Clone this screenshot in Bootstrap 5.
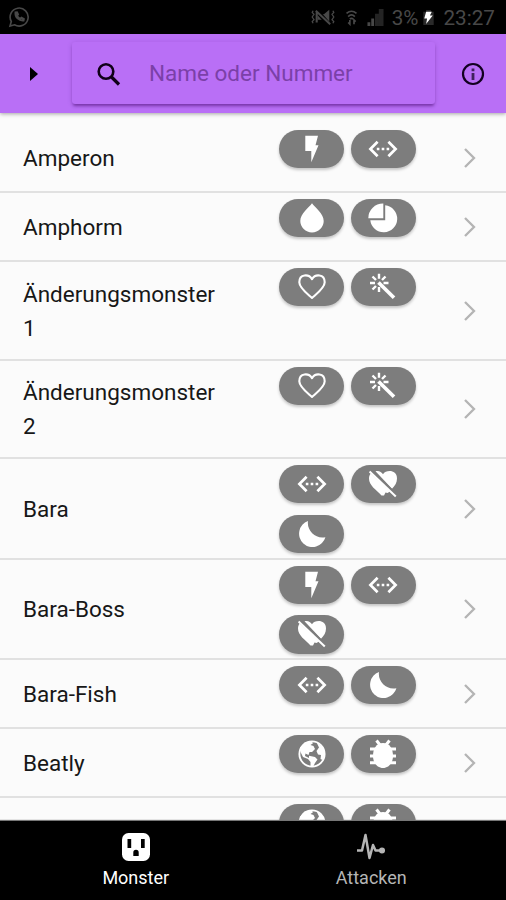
<!DOCTYPE html>
<html lang="de">
<head>
<meta charset="utf-8">
<meta name="viewport" content="width=device-width, initial-scale=1">
<title>Monster</title>
<link href="https://cdn.jsdelivr.net/npm/bootstrap@5.3.0/dist/css/bootstrap.min.css" rel="stylesheet">
<style>
body{font-family:Roboto,"Liberation Sans",sans-serif;height:900px;overflow:hidden;background:#fbfbfb;color:#171717}
.status{height:34px;background:#000;color:#484848;font-size:20.7px;line-height:36px;padding-left:8px;padding-right:11px}
.status span{padding-top:2px}
.topbar{height:79px;background:#b96ff6;padding-left:30px;padding-right:21px;box-shadow:0 1px 4px rgba(0,0,0,.35);z-index:2}
.search{width:363px;height:62px;margin-left:34px;margin-top:-1px;padding-left:24px;font-size:22.5px;color:#7b40a8;border-radius:3px;box-shadow:0 3px 3px -1px rgba(60,0,100,.45),0 1px 5px rgba(60,0,100,.18)}
.search span{margin-left:28px;padding-top:1px}
.search svg{margin-top:2px}
.monsters{padding-top:11px;min-height:0}
.monster{height:69px;border-bottom:2px solid #e1e1e1;padding-left:23px;font-size:22.5px;line-height:34px;flex:none}
.tall{height:98.5px}
.stacked{height:100.5px}
.title{width:200px;margin-right:56px;padding-top:1px}
.types{width:150px;align-self:flex-start;padding-top:6px;column-gap:6.5px;row-gap:11.5px}
.type{width:65.3px;height:38.3px;border-radius:20px;background:#7d7d7d;color:#fff;box-shadow:0 2px 3px rgba(0,0,0,.22)}
.type svg{width:30px;height:30px}
.go{width:14px;height:22px;margin-left:34px;margin-top:1px;color:#b4b4b4}
.tabs{height:79px;background:#000;color:#b5b5b5;font-size:18px;line-height:24px;z-index:2;box-shadow:0 -1px 1px #777;padding:0 17px 0 18px}
.tabs a{padding-top:11px;color:#b5b5b5}
.tabs a.active{color:#fff}
</style>
<script src="https://cdn.jsdelivr.net/npm/bootstrap@5.3.0/dist/js/bootstrap.bundle.min.js"></script>
</head>
<body class="d-flex flex-column">
<svg class="d-none">
<symbol id="bolt" viewBox="0 0 30 30"><path fill="currentColor" d="M8.300 1.700H21L18.500 11.300H21.500L14.300 28.300V17H8.300Z"/></symbol>
<symbol id="link" viewBox="0 0 30 30"><path fill="none" stroke="currentColor" stroke-width="2.700" d="M9.600 7.800 2.400 15l7.200 7.200M20.400 7.800l7.200 7.200-7.200 7.200"/><path fill="currentColor" d="M8.800 13.700h2.600v2.600H8.800zM13.700 13.700h2.600v2.600h-2.600zM18.600 13.700h2.600v2.600h-2.600z"/></symbol>
<symbol id="drop" viewBox="0 0 30 30"><path fill="currentColor" d="M15 .3C12 4.800 3.300 10.500 3.300 18a11.700 11.400 0 0 0 23.400 0C26.700 10.500 18 4.800 15 .3Z"/></symbol>
<symbol id="pie" viewBox="0 0 30 30"><path fill="currentColor" d="M17.200 2.300A13.500 13.500 0 1 1 2.300 17.200H17.200Z"/><path fill="currentColor" d="M15.300.6V15.300H.3A14.700 14.700 0 0 1 15.300.6Z"/></symbol>
<symbol id="heart" viewBox="0 0 30 30"><path fill="none" stroke="currentColor" stroke-width="2.100" stroke-linejoin="round" d="M15 26C10 21.500 2.300 16 2.300 10.300 2.300 1.500 12 1.800 15 7.200 18 1.800 27.700 1.500 27.700 10.300 27.700 16 20 21.500 15 26Z"/></symbol>
<symbol id="wand" viewBox="0 0 30 30"><path fill="none" stroke="currentColor" stroke-width="3.700" d="M10.500 10.500 26 25.800"/><path fill="none" stroke="currentColor" stroke-width="2.400" d="M11 1.800v5M11 15v5M2 11h5M15.500 11h5M4.500 4.500l3.500 3.500M17.500 4.500 14 8M4.500 17.500 8 14"/></symbol>
<symbol id="noheart" viewBox="0 0 30 30"><path fill="currentColor" d="M7.500 2.300C11 1.500 13.500 3 15 5.300 18 .5 29 .5 29 9.500 29 13.800 26.800 17 24 19.700Z"/><path fill="currentColor" d="M2.800 4.500 22 22.500 19.500 24 17.500 23.500 16 26.500 13.500 26.500C8 20.500 1 16.500 1 9.500 1 7.500 1.600 5.800 2.800 4.500Z"/><path stroke="#7d7d7d" stroke-width="1.500" d="M4 1.800 27 23.700"/><path stroke="currentColor" stroke-width="2" d="M1.600 2.600 27.800 27.400"/></symbol>
<symbol id="moon" viewBox="0 0 30 30"><path fill="currentColor" d="M11 2A13.400 13.400 0 1 0 28.400 18.200C19 20.500 9.500 12 11 2Z"/></symbol>
<symbol id="globe" viewBox="0 0 30 30"><circle cx="15" cy="15" r="12.600" fill="none" stroke="currentColor" stroke-width="1.900"/><path fill="currentColor" d="M3 9 7.500 3.500 14.500 2 16 4.200 13.500 6 16.500 7 18 10 15 13 12.500 13 11.500 16 8.500 14.500 8 17 12 19 12 16.800 18 18 20.500 20.500 18 24 16 28 13.500 27.500 13.500 23 11 20 6 18 3.500 13Z"/><path fill="currentColor" d="M19.500 3.300 26 8.500 28 15 25.500 21 23.500 20 24 16 21 15.500 19.500 12 22 8.500Z"/></symbol>
<symbol id="bug" viewBox="0 0 30 30"><path fill="currentColor" d="M15 4C22 4 25 10 25 17S20.500 29 15 29 5 24 5 17 8 4 15 4Z"/><path fill="none" stroke="currentColor" stroke-width="3" d="M8.500 1.500 12 6M21.500 1.500 18 6M2 10h26M2 17h26M2 23.800h26"/></symbol>
<symbol id="next" viewBox="0 0 14 22"><path fill="none" stroke="currentColor" stroke-width="2.300" d="M2 2l9 9-9 9"/></symbol>
</svg>
<header class="status d-flex align-items-center flex-shrink-0">
<svg class="me-auto" width="22" height="22" viewBox="0 0 22 22" fill="none" stroke="currentColor" stroke-width="1.600"><path d="M2 20 3.300 15.500A9 9 0 1 1 6.500 18.800Z"/><path stroke-width="2" d="M7.500 6.500C7 11 11 15 15.500 14.500l.3-1.500-2.300-1.200-1.300 1C10.500 12 9.500 11 9 9.500l1-1.200-1-2Z"/></svg>
<svg width="26" height="18" viewBox="0 0 26 20" fill="none" stroke="currentColor"><path stroke-width="1.400" d="M2 3 1 5l2 2-2 3 2 3-2 2 1 2M24 3l1 2-2 2 2 3-2 3 2 2-1 2"/><path fill="currentColor" stroke="none" d="M20 2v16l-6-5H7V7h7Z"/><path stroke="#000" stroke-width="5" d="M5 2 20 19"/><path stroke-width="2.300" d="M5 3 21 18M6 4v12"/></svg>
<svg class="ms-2 me-2" width="15" height="17" viewBox="0 0 18 20" fill="none" stroke="currentColor" stroke-width="2"><path d="M3 5Q9 0 15 5M5 9q4-4 8 0M7 12q2-2 4 0M7 13v5l-2-2M12 18v-5l2 2"/></svg>
<svg width="17" height="17" viewBox="0 0 17 18" fill="currentColor"><path d="M0 14h3v4H0zM4 10h3v8H4z"/><path opacity=".5" d="M8 5h4v13H8zM12 0h5v18h-5z"/></svg>
<span class="ms-2">3%</span>
<svg class="ms-1" width="13" height="17" viewBox="0 0 13 18"><path fill="#2a2a2a" d="M1 3h3V1h5v2h3v14H1z"/><path fill="#fff" d="M4 3h6L8 7h3L4 16l1-6H2z"/></svg>
<span class="ms-2">23:27</span>
</header>
<nav class="topbar d-flex align-items-center flex-shrink-0 position-relative">
<svg width="8" height="14" viewBox="0 0 8 14"><path d="M0 0 8 7 0 14Z"/></svg>
<div class="search d-flex align-items-center" role="search">
<svg width="25" height="25" viewBox="0 0 25 25" fill="none" stroke="#100018"><circle cx="10" cy="9.500" r="7.300" stroke-width="2.600"/><path stroke-width="3.200" d="m15 14.500 8 8"/></svg>
<span>Name oder Nummer</span></div>
<svg class="ms-auto" width="24" height="24" viewBox="0 0 24 24"><circle cx="12" cy="12" r="10" fill="none" stroke="#120020" stroke-width="2.200"/><path fill="#40205c" d="M10.600 6.500h2.800v2.700h-2.800zM10.600 11h2.800v7h-2.800z"/></svg>
</nav>
<main class="monsters flex-grow-1 overflow-hidden d-flex flex-column">
<div class="monster d-flex align-items-center"><div class="title">Amperon</div><div class="types d-flex flex-wrap"><span class="type d-flex align-items-center justify-content-center"><svg><use href="#bolt"/></svg></span><span class="type d-flex align-items-center justify-content-center"><svg><use href="#link"/></svg></span></div><svg class="go"><use href="#next"/></svg></div>
<div class="monster d-flex align-items-center"><div class="title">Amphorm</div><div class="types d-flex flex-wrap"><span class="type d-flex align-items-center justify-content-center"><svg><use href="#drop"/></svg></span><span class="type d-flex align-items-center justify-content-center"><svg><use href="#pie"/></svg></span></div><svg class="go"><use href="#next"/></svg></div>
<div class="monster tall d-flex align-items-center"><div class="title">Änderungsmonster 1</div><div class="types d-flex flex-wrap"><span class="type d-flex align-items-center justify-content-center"><svg><use href="#heart"/></svg></span><span class="type d-flex align-items-center justify-content-center"><svg><use href="#wand"/></svg></span></div><svg class="go"><use href="#next"/></svg></div>
<div class="monster tall d-flex align-items-center"><div class="title">Änderungsmonster 2</div><div class="types d-flex flex-wrap"><span class="type d-flex align-items-center justify-content-center"><svg><use href="#heart"/></svg></span><span class="type d-flex align-items-center justify-content-center"><svg><use href="#wand"/></svg></span></div><svg class="go"><use href="#next"/></svg></div>
<div class="monster stacked d-flex align-items-center"><div class="title">Bara</div><div class="types d-flex flex-wrap"><span class="type d-flex align-items-center justify-content-center"><svg><use href="#link"/></svg></span><span class="type d-flex align-items-center justify-content-center"><svg><use href="#noheart"/></svg></span><span class="type d-flex align-items-center justify-content-center"><svg><use href="#moon"/></svg></span></div><svg class="go"><use href="#next"/></svg></div>
<div class="monster stacked d-flex align-items-center"><div class="title">Bara-Boss</div><div class="types d-flex flex-wrap"><span class="type d-flex align-items-center justify-content-center"><svg><use href="#bolt"/></svg></span><span class="type d-flex align-items-center justify-content-center"><svg><use href="#link"/></svg></span><span class="type d-flex align-items-center justify-content-center"><svg><use href="#noheart"/></svg></span></div><svg class="go"><use href="#next"/></svg></div>
<div class="monster d-flex align-items-center"><div class="title">Bara-Fish</div><div class="types d-flex flex-wrap"><span class="type d-flex align-items-center justify-content-center"><svg><use href="#link"/></svg></span><span class="type d-flex align-items-center justify-content-center"><svg><use href="#moon"/></svg></span></div><svg class="go"><use href="#next"/></svg></div>
<div class="monster d-flex align-items-center"><div class="title">Beatly</div><div class="types d-flex flex-wrap"><span class="type d-flex align-items-center justify-content-center"><svg><use href="#globe"/></svg></span><span class="type d-flex align-items-center justify-content-center"><svg><use href="#bug"/></svg></span></div><svg class="go"><use href="#next"/></svg></div>
<div class="monster d-flex align-items-center"><div class="title"></div><div class="types d-flex flex-wrap"><span class="type d-flex align-items-center justify-content-center"><svg><use href="#globe"/></svg></span><span class="type d-flex align-items-center justify-content-center"><svg><use href="#bug"/></svg></span></div></div>
</main>
<footer class="tabs d-flex flex-shrink-0 position-relative">
<a class="active w-50 d-flex flex-column align-items-center text-decoration-none"><svg width="30" height="30" viewBox="0 0 30 30"><rect x="1" y="1" width="28" height="28" rx="6.500" fill="#fff"/><path d="M6.500 7h3.700v9H6.500zM20 7h3.700v9H20zM12.300 24v-3.500a2.700 2.700 0 0 1 5.400 0V24z"/></svg><span class="mt-1">Monster</span></a>
<a class="w-50 d-flex flex-column align-items-center text-decoration-none"><svg width="30" height="30" viewBox="0 0 30 30" fill="none" stroke="currentColor" stroke-width="2.500" stroke-linejoin="round"><path d="M1 18.500h5L9.500 3l4 23L17 13l2.500 5.500H25"/><circle cx="26" cy="18.500" r="2.300" fill="currentColor" stroke-width="1.500"/></svg><span class="mt-1">Attacken</span></a>
</footer>
</body>
</html>
